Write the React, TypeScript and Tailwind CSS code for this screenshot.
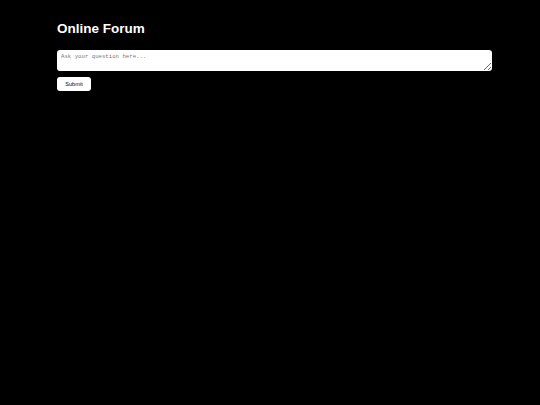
export default function App() {
  return (
    <div className="min-h-[405px] w-full bg-black" style={{ fontFamily: '"Liberation Sans", Arial, sans-serif' }}>
      <div className="pl-[57px] pr-[48px] pt-[20px]">
        <h1 className="text-[13.5px] font-bold leading-[18px] text-white">Online Forum</h1>
        <textarea
          placeholder="Ask your question here..."
          className="mt-[12px] block h-[21px] w-full rounded-[3px] bg-white px-[4px] py-[3px] text-[5.7px] leading-[7px] text-black placeholder:text-[#777]"
          style={{ fontFamily: '"Liberation Mono", "Courier New", monospace' }}
        />
        <button className="mt-[6px] block h-[14px] w-[34px] rounded-[3px] bg-white text-[5.6px] text-black">
          Submit
        </button>
      </div>
    </div>
  );
}
